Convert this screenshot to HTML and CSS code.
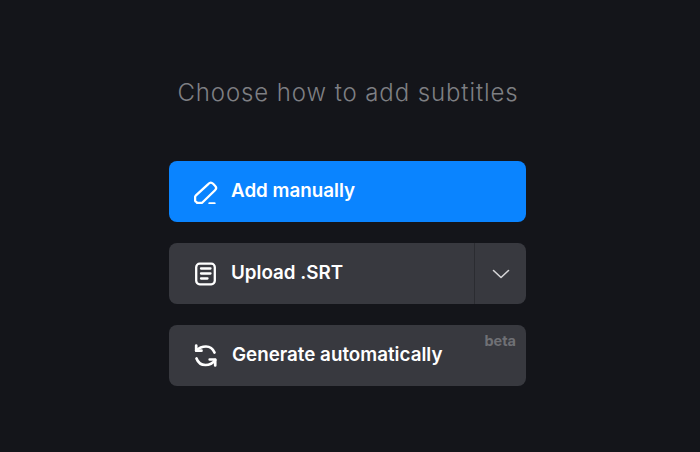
FILE: index.html
```html
<!DOCTYPE html>
<html lang="en">
<head>
    <meta charset="UTF-8">
    <meta name="viewport" content="width=device-width, initial-scale=1.0">
    <title>Choose how to add subtitles</title>
    <link rel="stylesheet" href="styles.css">
</head>
<body>

<div class="chooser">
    <h1 class="title">Choose how to add subtitles</h1>

    <button class="option option-primary">
        <svg class="icon" viewBox="0 0 24 24" fill="none" stroke="currentColor" stroke-width="2.300" stroke-linecap="round" stroke-linejoin="round">
            <path d="M2.200 21.800c-.7-.1-1.100-.6-1.100-1.300v-3.300c0-.6.200-1.100.6-1.500L14.500 3.800c1.300-1.300 3.300-1.300 4.600 0l1.900 1.900c1.300 1.300 1.300 3.300 0 4.600L8.400 22.500c-.4.400-.9.500-1.500.5H3.200z"/>
            <path d="M15.500 23.300h5"/>
        </svg>
        <span class="label">Add manually</span>
    </button>

    <div class="option option-split">
        <button class="split-main">
            <svg class="icon" viewBox="0 0 24 24" fill="none" stroke="currentColor" stroke-width="2.300" stroke-linecap="round" stroke-linejoin="round">
                <rect x="2.200" y="1.700" width="18.600" height="20.600" rx="3.500"/>
                <path d="M7 6.500h9.500M7 11.500h9.500M7 16.500h6.500"/>
            </svg>
            <span class="label">Upload .SRT</span>
        </button>
        <button class="split-arrow">
            <svg viewBox="0 0 18 10" fill="none" stroke="currentColor" stroke-width="1.600" stroke-linecap="round" stroke-linejoin="round">
                <path d="M1.500 1.500 9 8.500l7.500-7"/>
            </svg>
        </button>
    </div>

    <button class="option option-generate">
        <svg class="icon" viewBox="0 0 24 24" fill="none" stroke="currentColor" stroke-width="2.700" stroke-linecap="round" stroke-linejoin="round">
            <path d="M20.500 8.500C19 5 15.800 2.500 12 2.500c-4 0-7.200 1.500-9.800 4"/>
            <path d="M2.200 1.500v5.200h5.300"/>
            <path d="M2.500 14.500C4 18.500 7.500 21 11.500 21c4 0 7.200-1.500 9.700-5"/>
            <path d="M21.200 21.500V15.500h-5.500"/>
        </svg>
        <span class="label">Generate automatically</span>
        <span class="badge">beta</span>
    </button>
</div>

</body>
</html>
```
FILE: styles.css
```css
body {
    font-family: Inter, "Liberation Sans", sans-serif;
    margin: 0;
    height: 452px;
    overflow: hidden;
    background-color: #14151a;
}

.chooser {
    width: 357px;
    margin-left: 169px;
    padding-top: 77px;
    display: flex;
    flex-direction: column;
}

.title {
    margin: 0 0 52px;
    padding-left: 1px;
    font-size: 24px;
    line-height: 32px;
    font-weight: 300;
    letter-spacing: 0.9px;
    text-align: center;
    color: #7e7f83;
}

button {
    font-family: inherit;
    border: none;
    background: none;
    color: inherit;
    cursor: pointer;
}

.option {
    position: relative;
    height: 61px;
    margin-bottom: 21px;
    padding: 0;
    display: flex;
    align-items: center;
    border-radius: 8px;
    font-size: 18.800px;
    font-weight: 600;
    color: #fff;
    background-color: #38393f;
}

.option-primary {
    background-color: #0a84ff;
    padding-left: 25px;
    gap: 13px;
}

.option-generate {
    padding-left: 25px;
    gap: 14px;
}

.label {
    margin-bottom: 2px;
}

.icon {
    width: 24px;
    height: 24px;
    flex-shrink: 0;
}

.option-split {
    align-items: stretch;
}

.split-main {
    flex: 1;
    display: flex;
    align-items: center;
    gap: 13px;
    padding: 0 0 0 25px;
    font-size: inherit;
    font-weight: inherit;
}

.split-arrow {
    width: 52px;
    padding: 0;
    display: flex;
    align-items: center;
    justify-content: center;
    border-left: 1px solid #2b2c31;
    color: #d6d6d8;
}

.split-arrow svg {
    width: 18px;
    height: 10px;
}

.badge {
    position: absolute;
    top: 8px;
    right: 10px;
    font-size: 14.500px;
    line-height: 16px;
    font-weight: 700;
    color: #6f7075;
}
```
